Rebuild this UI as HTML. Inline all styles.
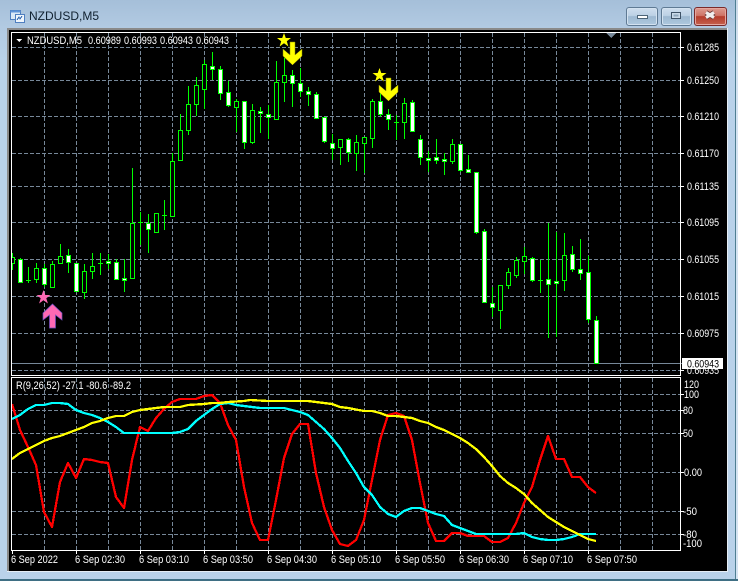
<!DOCTYPE html>
<html><head><meta charset="utf-8"><title>NZDUSD,M5</title>
<style>
html,body{margin:0;padding:0;width:738px;height:581px;overflow:hidden;background:#b9d2ea}
#w{position:relative;width:738px;height:581px;overflow:hidden;background:linear-gradient(#a5bfd9 0,#b2cae2 28px,#b9d2ea 60px,#b9d2ea 100%)}
.b{position:absolute;top:7px;height:17px;box-sizing:content-box;border:1px solid #5f7a94;border-radius:3px;box-shadow:inset 0 0 0 1px #d3e2f0;background:linear-gradient(#cfdeee 0,#bcd1e5 45%,#9db8d1 50%,#aec8de 100%)}
#t{position:absolute;left:29px;top:9px;font:12px "Liberation Sans",sans-serif;color:#10202f;white-space:nowrap}
svg{position:absolute;left:0;top:0}
text{font-family:"Liberation Sans",sans-serif;font-size:11px;fill:#fff}
</style></head><body>
<div id="w">
<div id="t">NZDUSD,M5</div>
<div class="b" style="left:626px;width:30px"></div>
<div class="b" style="left:661px;width:29px"></div>
<div class="b" style="left:694px;width:31px;border-color:#7a2a2a;box-shadow:inset 0 0 0 1px #e5a79f;background:linear-gradient(#dc9a90 0,#cf7567 45%,#b53c2c 50%,#c4604c 100%)"></div>
<svg width="738" height="581" viewBox="0 0 738 581" shape-rendering="crispEdges">
<defs><clipPath id="c"><rect x="12" y="33" width="668" height="342"/></clipPath>
<clipPath id="d"><rect x="12" y="378" width="668" height="172"/></clipPath></defs>
<!-- title icon -->
<rect x="10.5" y="10.5" width="10" height="9" fill="#dce9f6" stroke="#4f7fc0"/><rect x="10.5" y="10.5" width="10" height="2" fill="#5f94d8"/>
<rect x="15.5" y="14.5" width="9" height="8" fill="#f0f6fc" stroke="#4f7fc0"/><path d="M17 20l2-3 1 2 2-3" fill="none" stroke="#3c6fb5"/>
<!-- buttons glyphs -->
<rect x="637.5" y="15.5" width="10" height="3" fill="#fff" stroke="#4d6477"/>
<rect x="671.5" y="12.5" width="9" height="6" fill="#c9d9e8" stroke="#3e5266"/><rect x="673.5" y="14.5" width="5" height="2" fill="#8fa6bb"/>
<g shape-rendering="auto"><path d="M706 12.500L714 17.500M714 12.500L706 17.500" stroke="#6e3a38" stroke-width="5" fill="none"/><path d="M706 12.500L714 17.500M714 12.500L706 17.500" stroke="#f0eeee" stroke-width="3.200" fill="none"/></g>
<!-- frame -->
<rect x="7" y="28" width="721" height="544" fill="#e6eef6"/>
<rect x="7" y="28" width="720" height="2" fill="#8a8a8a"/>
<rect x="7" y="28" width="2" height="543" fill="#8a8a8a"/>
<rect x="9" y="30" width="718" height="541" fill="#000"/>
<rect x="735" y="0" width="1" height="581" fill="#4f7f92"/>
<rect x="736" y="0" width="2" height="581" fill="#fff" opacity=".4"/>
<rect x="0" y="579" width="738" height="2" fill="#3f6f84"/>
<!-- grid main -->
<path d="M12 47.5H680M12 80.5H680M12 116.5H680M12 153.5H680M12 186.5H680M12 222.5H680M12 259.5H680M12 296.5H680M12 333.5H680M12 370.5H680" stroke="#778899" stroke-dasharray="4 2" fill="none"/>
<path d="M44.5 33V375M76.5 33V375M108.5 33V375M140.5 33V375M172.5 33V375M204.5 33V375M236.5 33V375M268.5 33V375M300.5 33V375M332.5 33V375M364.5 33V375M396.5 33V375M428.5 33V375M460.5 33V375M492.5 33V375M524.5 33V375M556.5 33V375M588.5 33V375M620.5 33V375M652.5 33V375" stroke="#778899" stroke-dasharray="4 2" fill="none"/>
<path d="M12 363.5H682" stroke="#778899"/>
<g clip-path="url(#c)">
<path stroke="#00ff00" fill="none" d="M12.5 253V270M20.5 258V283M28.5 267V283M36.5 263V283M44.5 264V287M52.5 261V288M60.5 244V263M68.5 249V273M76.5 263V292M84.5 264V299M92.5 253V279M100.5 253V275M108.5 254V269M116.5 259V279M124.5 259V292M132.5 168V278M140.5 212V245M148.5 214V253M156.5 213V232M164.5 200V230M172.5 153V216M180.5 114V160M188.5 86V135M196.5 77V116M204.5 60V109M212.5 52V80M220.5 66V100M228.5 81V107M236.5 99V132M244.5 101V149M252.5 104V144M260.5 107V133M268.5 105V139M276.5 61V119M284.5 58V102M292.5 70V107M300.5 68V97M308.5 87V106M316.5 92V119M324.5 117V143M332.5 134V160M340.5 139V165M348.5 138V162M356.5 135V171M364.5 137V173M372.5 99V148M380.5 92V117M388.5 109V130M396.5 115V140M404.5 98V139M412.5 100V131M420.5 135V165M428.5 151V172M436.5 139V164M444.5 153V175M452.5 139V164M460.5 144V172M468.5 155V172M476.5 172V234M484.5 229V303M492.5 287V317M500.5 285V329M508.5 268V289M516.5 257V278M524.5 247V274M532.5 257V282M540.5 260V293M548.5 223V338M556.5 232V337M564.5 233V291M572.5 246V272M580.5 239V280M588.5 256V323M596.5 316V363"/>
<path stroke="#00ff00" fill="none" d="M26 280.5h5M98 263.5h5M138 222.5h5M162 215.5h5M394 122.5h5M538 280.5h5"/>
<path stroke="#00ff00" fill="#000" d="M10.5 257.5h4v6h-4zM34.5 268.5h4v11h-4zM50.5 264.5h4v23h-4zM58.5 256.5h4v7h-4zM82.5 271.5h4v21h-4zM90.5 266.5h4v5h-4zM130.5 223.5h4v55h-4zM154.5 213.5h4v19h-4zM170.5 161.5h4v55h-4zM178.5 130.5h4v30h-4zM186.5 104.5h4v26h-4zM194.5 85.5h4v19h-4zM202.5 64.5h4v25h-4zM234.5 101.5h4v6h-4zM250.5 110.5h4v32h-4zM274.5 82.5h4v37h-4zM282.5 75.5h4v7h-4zM338.5 139.5h4v8h-4zM354.5 142.5h4v11h-4zM362.5 137.5h4v6h-4zM370.5 101.5h4v37h-4zM402.5 103.5h4v19h-4zM450.5 144.5h4v17h-4zM498.5 285.5h4v25h-4zM506.5 272.5h4v13h-4zM514.5 260.5h4v15h-4zM522.5 256.5h4v5h-4zM562.5 255.5h4v25h-4z"/>
<path stroke="#00ff00" fill="#fff" d="M18.5 259.5h4v23h-4zM42.5 268.5h4v16h-4zM66.5 255.5h4v7h-4zM74.5 263.5h4v28h-4zM106.5 261.5h4v2h-4zM114.5 262.5h4v17h-4zM122.5 278.5h4v2h-4zM146.5 223.5h4v6h-4zM210.5 66.5h4v3h-4zM218.5 69.5h4v24h-4zM226.5 92.5h4v13h-4zM242.5 101.5h4v41h-4zM258.5 111.5h4v2h-4zM266.5 114.5h4v3h-4zM290.5 75.5h4v8h-4zM298.5 83.5h4v8h-4zM306.5 91.5h4v3h-4zM314.5 94.5h4v24h-4zM322.5 117.5h4v24h-4zM330.5 143.5h4v5h-4zM346.5 139.5h4v13h-4zM378.5 101.5h4v13h-4zM386.5 114.5h4v5h-4zM410.5 102.5h4v29h-4zM418.5 139.5h4v18h-4zM426.5 158.5h4v2h-4zM434.5 157.5h4v3h-4zM442.5 159.5h4v2h-4zM458.5 144.5h4v26h-4zM466.5 169.5h4v3h-4zM474.5 172.5h4v60h-4zM482.5 231.5h4v71h-4zM490.5 303.5h4v4h-4zM530.5 258.5h4v22h-4zM546.5 279.5h4v5h-4zM554.5 281.5h4v2h-4zM570.5 254.5h4v15h-4zM578.5 269.5h4v4h-4zM586.5 272.5h4v47h-4zM594.5 320.5h4v43h-4z"/>
</g>
<!-- top triangle -->
<path d="M606 33h10l-5 5z" fill="#778899"/>
<!-- arrows & stars -->
<g shape-rendering="auto">
<path d="M52.500 304L62 313V320L55.500 315V328H49.500V315L43 320V313Z" fill="#ff69b4" stroke="#6a4fc0" stroke-width=".7"/>
<path d="M43.500 290l1.800 5h5.200l-4.200 3.200 1.600 5.300-4.400-3.200-4.400 3.200 1.600-5.300-4.200-3.200h5.200z" fill="#ff69b4"/>
<path d="M290 42H295V55L302 49V56L292.500 65L283 56V49L290 55Z" fill="#ffff00" stroke="#8a8a00" stroke-width=".5"/>
<path d="M284 33l1.800 5h5.200l-4.200 3.200 1.600 5.300-4.400-3.200-4.400 3.200 1.600-5.300-4.200-3.200h5.200z" fill="#ffff00"/>
<path d="M386 78H391V91L398 85V92L388.500 101L379 92V85L386 91Z" fill="#ffff00" stroke="#8a8a00" stroke-width=".5"/>
<path d="M379.500 68l1.800 5h5.200l-4.200 3.200 1.600 5.300-4.400-3.200-4.400 3.200 1.600-5.300-4.200-3.200h5.200z" fill="#ffff00"/>
</g>
<!-- sub window grid -->
<path d="M12 394.500H680M12 410.500H680M12 433.500H680M12 472.500H680M12 511.500H680M12 534.500H680" stroke="#778899" stroke-dasharray="4 2" fill="none"/>
<path d="M44.500 378V550M76.500 378V550M108.500 378V550M140.500 378V550M172.500 378V550M204.500 378V550M236.500 378V550M268.500 378V550M300.500 378V550M332.500 378V550M364.500 378V550M396.500 378V550M428.500 378V550M460.500 378V550M492.500 378V550M524.500 378V550M556.500 378V550M588.500 378V550M620.500 378V550M652.500 378V550" stroke="#778899" stroke-dasharray="4 2" fill="none"/>
<g clip-path="url(#d)" fill="none" stroke-width="2.300" stroke-linejoin="round">
<polyline stroke="#ff0000" points="12,404 20,430 28,447 36,465 44,512 52,527 60,482 68,463 76,478 84,459 92,460 100,462 108,463 116,497 124,508 132,460 140,427 148,431 156,418 164,409 172,402 180,399 188,399 196,399 204,396 212,395 220,403 228,425 236,440 244,487 252,523 260,540 268,540 276,500 284,458 292,434 300,424 308,424 316,473 324,507 332,530 340,544 348,546 356,540 364,520 372,480 380,440 388,415 396,413 404,416 412,440 420,483 428,523 436,541 444,541 452,533 460,533 468,536 476,536 484,536 492,542 500,542 508,538 516,523 524,503 532,487 540,460 548,436 556,459 564,459 572,477 580,477 588,487 596,493"/>
<polyline stroke="#00ffff" points="12,419 20,415 28,409 36,405 44,405 52,403 60,403 68,404 76,410 84,413 92,415 100,418 108,422 116,427 124,433 172,433 180,432 188,429 196,421 204,415 212,409 220,404 228,403 236,405 244,406 260,408 276,408 284,408 292,410 300,412 308,415 316,422 324,429 332,438 340,448 348,461 356,473 364,487 372,495 380,507 388,514 396,517 404,511 412,508 420,508 428,511 436,514 444,516 452,525 460,528 468,531 476,534 516,534 524,533 532,537 540,539 548,540 556,540 564,539 572,537 580,534 596,534"/>
<polyline stroke="#ffff00" points="12,459 20,453 28,449 36,445 44,441 52,438 60,436 68,433 76,430 84,427 92,423 100,421 108,418 116,416 124,416 132,412 140,410 148,409 156,408 164,407 180,407 188,405 204,404 212,403 220,403 228,402 244,401 250,400 268,401 308,401 316,402 332,404 340,407 348,408 364,411 372,411 380,413 388,416 396,416 412,418 420,421 428,423 436,427 444,430 452,434 460,438 468,443 476,449 484,457 492,466 500,476 508,483 516,488 524,494 532,503 540,510 548,517 556,522 564,527 572,531 580,535 588,539 596,541"/>
</g>
<!-- panel borders -->
<path d="M11.500 32.500H680.500V375.500H11.500ZM11.500 377.500H680.500V550.500H11.500Z" fill="none" stroke="#fff"/>
<path stroke="#fff" d="M681 47.500h3M681 80.500h3M681 116.500h3M681 153.500h3M681 186.500h3M681 222.500h3M681 259.500h3M681 296.500h3M681 333.500h3M681 370.500h3M681 394.500h3M681 410.500h3M681 433.500h3M681 472.500h3M681 511.500h3M681 534.500h3M12.500 551v3M76.500 551v3M140.500 551v3M204.500 551v3M268.500 551v3M332.500 551v3M396.500 551v3M460.500 551v3M524.500 551v3M588.500 551v3"/>
<path d="M16 39h6l-3 3z" fill="#fff"/>
<g shape-rendering="auto">
<text x="27" y="44" textLength="55" lengthAdjust="spacingAndGlyphs">NZDUSD,M5</text>
<text x="88" y="44" textLength="33" lengthAdjust="spacingAndGlyphs">0.60989</text>
<text x="124" y="44" textLength="33" lengthAdjust="spacingAndGlyphs">0.60993</text>
<text x="160" y="44" textLength="33" lengthAdjust="spacingAndGlyphs">0.60943</text>
<text x="196" y="44" textLength="33" lengthAdjust="spacingAndGlyphs">0.60943</text>
<text x="16" y="389" textLength="115" lengthAdjust="spacingAndGlyphs">R(9,26,52) -27.1 -80.6 -89.2</text>
<text x="687" y="51" textLength="32" lengthAdjust="spacingAndGlyphs">0.61285</text>
<text x="687" y="84" textLength="32" lengthAdjust="spacingAndGlyphs">0.61250</text>
<text x="687" y="120" textLength="32" lengthAdjust="spacingAndGlyphs">0.61210</text>
<text x="687" y="157" textLength="32" lengthAdjust="spacingAndGlyphs">0.61170</text>
<text x="687" y="190" textLength="32" lengthAdjust="spacingAndGlyphs">0.61135</text>
<text x="687" y="226" textLength="32" lengthAdjust="spacingAndGlyphs">0.61095</text>
<text x="687" y="263" textLength="32" lengthAdjust="spacingAndGlyphs">0.61055</text>
<text x="687" y="300" textLength="32" lengthAdjust="spacingAndGlyphs">0.61015</text>
<text x="687" y="337" textLength="32" lengthAdjust="spacingAndGlyphs">0.60975</text>
<text x="687" y="374" textLength="32" lengthAdjust="spacingAndGlyphs">0.60935</text>
<rect x="682" y="358" width="41" height="11" fill="#fff" shape-rendering="crispEdges"/>
<text x="687" y="367.500" textLength="32" lengthAdjust="spacingAndGlyphs" style="fill:#000">0.60943</text>
<text x="684" y="388" textLength="15" lengthAdjust="spacingAndGlyphs">120</text>
<text x="684" y="398" textLength="15" lengthAdjust="spacingAndGlyphs">100</text>
<text x="683" y="414" textLength="10" lengthAdjust="spacingAndGlyphs">80</text>
<text x="683" y="437" textLength="10" lengthAdjust="spacingAndGlyphs">50</text>
<text x="684" y="476" textLength="18" lengthAdjust="spacingAndGlyphs">0.00</text>
<text x="683" y="515" textLength="14" lengthAdjust="spacingAndGlyphs">-50</text>
<text x="683" y="538" textLength="14" lengthAdjust="spacingAndGlyphs">-80</text>
<text x="683" y="547" textLength="19" lengthAdjust="spacingAndGlyphs">-100</text>
<text x="11" y="563" textLength="47" lengthAdjust="spacingAndGlyphs">6 Sep 2022</text>
<text x="75" y="563" textLength="50" lengthAdjust="spacingAndGlyphs">6 Sep 02:30</text>
<text x="139" y="563" textLength="50" lengthAdjust="spacingAndGlyphs">6 Sep 03:10</text>
<text x="203" y="563" textLength="50" lengthAdjust="spacingAndGlyphs">6 Sep 03:50</text>
<text x="267" y="563" textLength="50" lengthAdjust="spacingAndGlyphs">6 Sep 04:30</text>
<text x="331" y="563" textLength="50" lengthAdjust="spacingAndGlyphs">6 Sep 05:10</text>
<text x="395" y="563" textLength="50" lengthAdjust="spacingAndGlyphs">6 Sep 05:50</text>
<text x="459" y="563" textLength="50" lengthAdjust="spacingAndGlyphs">6 Sep 06:30</text>
<text x="523" y="563" textLength="50" lengthAdjust="spacingAndGlyphs">6 Sep 07:10</text>
<text x="587" y="563" textLength="50" lengthAdjust="spacingAndGlyphs">6 Sep 07:50</text>
</g>
</svg>
</div>
</body></html>
